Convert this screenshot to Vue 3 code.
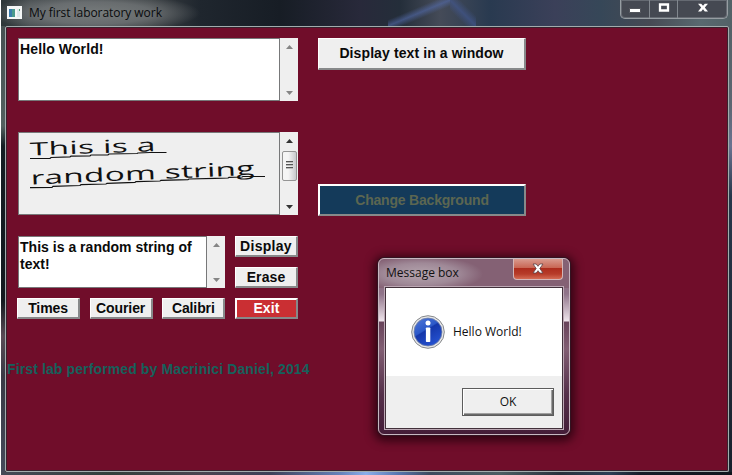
<script setup>
const fonts = ['Times', 'Courier', 'Calibri']
</script>

<template>
  <main class="window">
    <header class="titlebar">
      <div class="caption">
        <svg class="app-icon" width="15" height="13" viewBox="0 0 15 13">
          <rect width="15" height="13" fill="#f4f6f6" />
          <rect x="2" y="3" width="6" height="8" fill="#4a9a8c" />
          <rect x="2" y="3" width="3" height="8" fill="#397bab" />
          <rect x="10" y="3" width="3" height="8" fill="#dce8eb" />
          <path d="M12 3h1v2h-1z" fill="#55a276" />
        </svg>
        <span class="caption-text">My first laboratory work</span>
      </div>
      <div class="controls">
        <span class="control"><svg width="12" height="10" viewBox="0 0 12 10"><path d="M.5 5.5h11v4H.5z" fill="#fff" stroke="#52555c" /></svg></span>
        <span class="control"><svg width="12" height="10" viewBox="0 0 12 10"><path d="M2 1.500h8v6H2z" fill="none" stroke="#fff" stroke-width="2.3" /></svg></span>
        <span class="control last"><svg width="12" height="10" viewBox="0 0 12 10"><path d="M1 .8h3.2L6 2.800 7.8.8H11L7.8 4.500 11 8.500H7.8L6 6.300 4.2 8.500H1L4.2 4.500z" fill="#fff" /></svg></span>
      </div>
    </header>

    <section class="client">
      <div class="left">
        <div class="edit first">
          <div class="field"><span class="hello">Hello World!</span></div>
          <div class="scroll">
            <svg width="7" height="4" viewBox="0 0 7 4"><path d="M0 4 3.5 0 7 4z" /></svg>
            <svg width="7" height="4" viewBox="0 0 7 4"><path d="M0 0h7L3.500 4z" /></svg>
          </div>
        </div>
        <div class="edit second">
          <div class="field gray">
            <svg width="258" height="80" viewBox="19 133 258 80" class="slanted">
              <g transform="rotate(-2 30 155)">
                <text x="30" y="155.500" font-size="18" textLength="126" lengthAdjust="spacingAndGlyphs">This is a</text>
              </g>
              <g transform="rotate(-2.500 31 184)">
                <text x="31" y="184.500" font-size="18.500" textLength="224" lengthAdjust="spacingAndGlyphs">random string</text>
              </g>
              <path d="M30 158.500H50L51 157.500 70 156.800 71 156.200 90 155.800 91 155 108 154.800 109 154 137 153.500 138 153 150 152.500H166.500M30 187.700 52 187.300 53 186.300 80 185.500 81 184.700 106 184 107 183.300 135 182.300 136 181.600 160 181 161 180.300 188 179.600 189 179 215 178.300 228 178 229 177.400 242 177 243 176.500H265" />
            </svg>
          </div>
          <div class="scroll active">
            <svg width="7" height="4" viewBox="0 0 7 4"><path d="M0 4 3.5 0 7 4z" /></svg>
            <div class="thumb"><i></i><i></i><i></i></div>
            <svg width="7" height="4" viewBox="0 0 7 4"><path d="M0 0h7L3.500 4z" /></svg>
          </div>
        </div>
        <div class="editor-row">
          <div class="edit third">
            <div class="field"><span>This is a random string of<br>text!</span></div>
            <div class="scroll">
              <svg width="7" height="4" viewBox="0 0 7 4"><path d="M0 4 3.5 0 7 4z" /></svg>
              <svg width="7" height="4" viewBox="0 0 7 4"><path d="M0 0h7L3.500 4z" /></svg>
            </div>
          </div>
          <div class="actions">
            <button class="btn display">Display</button>
            <button class="btn">Erase</button>
          </div>
        </div>
        <div class="font-row">
          <button v-for="font in fonts" :key="font" class="btn font">{{ font }}</button>
          <button class="btn exit">Exit</button>
        </div>
        <p class="credit">First lab performed by Macrinici Daniel, 2014</p>
      </div>
      <div class="right">
        <button class="btn wide">Display text in a window</button>
        <button class="btn wide change">Change Background</button>
      </div>
    </section>

    <div class="dialog">
      <div class="dialog-head">
        <span class="dialog-title">Message box</span>
        <span class="dialog-close">
          <svg width="12" height="11" viewBox="0 0 12 11"><path d="M1 1h3.200L6 3.300 7.800 1H11L7.800 5.500 11 10H7.800L6 7.700 4.200 10H1l3.200-4.500z" fill="#fff" stroke="#5b4148" stroke-width=".8" /></svg>
        </span>
      </div>
      <div class="dialog-body">
        <div class="message">
          <svg width="34" height="34" viewBox="0 0 34 34">
            <defs>
              <linearGradient id="info-blue" x1="0" y1="0" x2=".6" y2="1">
                <stop offset="0" stop-color="#5379d8" />
                <stop offset=".48" stop-color="#2b58c8" />
                <stop offset=".52" stop-color="#1537aa" />
                <stop offset="1" stop-color="#2450cf" />
              </linearGradient>
            </defs>
            <circle cx="17" cy="17" r="16.300" fill="#e7e7e7" stroke="#85888c" />
            <circle cx="17" cy="17" r="14" fill="url(#info-blue)" stroke="#7483a8" stroke-width=".8" />
            <circle cx="17" cy="8" r="2.500" fill="#fff" />
            <rect x="14.900" y="12.500" width="4.400" height="14.500" rx=".8" fill="#fff" />
          </svg>
          <span>Hello World!</span>
        </div>
        <div class="dialog-foot"><button class="ok">OK</button></div>
      </div>
    </div>
  </main>
</template>

<style>
body { margin: 0; overflow: hidden; }
</style>

<style scoped>
* { box-sizing: border-box; }
.window {
  position: relative;
  width: 732px;
  height: 475px;
  padding: 0 3px 3px 5px;
  background:
    linear-gradient(90deg, #fff 1px, #0000 1px) 0 0 / 1px 475px no-repeat,
    linear-gradient(90deg, #454957 0, #323f3b 110px, #4a4450 200px, #3d4058 270px, #6682ba 340px, #8aaeea 366px, #5876b0 398px, #3d4a5e 430px, #4b5d62 500px, #27303c 560px, #2c3e55 610px, #151c28 640px, #10151d 732px) 0 472px / 732px 3px no-repeat,
    linear-gradient(180deg, #465152 0, #53605f 100px, #131d23 120px, #14191f 275px, #594b56 310px, #393a45 350px, #45495a 449px) 0 26px / 5px 449px no-repeat,
    linear-gradient(180deg, #536267 0, #5d6672 80px, #6a7391 120px, #26364a 170px, #202936 350px, #17202c 449px) 729px 26px / 3px 449px no-repeat,
    radial-gradient(ellipse 105px 20px at 95px 13px, #858989cc 0, #777b7dbb 55%, #0000 100%) 0 0 / 100% 26px no-repeat,
    linear-gradient(to bottom right, #0000 38%, #536bab99 50%, #0000 62%) 388px 0 / 62px 26px no-repeat,
    linear-gradient(to bottom left, #0000 30%, #43599599 50%, #0000 70%) 450px 0 / 26px 26px no-repeat,
    linear-gradient(90deg, #2c3537 0, #454b4e 30px, #393e41 150px, #1f262e 200px, #171d25 280px, #28293a 360px, #242e3a 400px, #454b58 440px, #293a50 490px, #3b4059 555px, #364758 600px, #464a54 650px, #596970 700px, #536267);
  font-family: "Liberation Sans", sans-serif;
  font-size: 14px;
  font-weight: bold;
  color: #0a0a0a;
}
.titlebar { display: flex; justify-content: space-between; height: 26px; }
.caption { display: flex; align-items: flex-start; padding: 6px 0 0 2px; }
.caption-text {
  margin: -1px 0 0 7px;
  font: 12px/16px "Open Sans", sans-serif;
  letter-spacing: -.05px;
  color: #090b0d;
}
.controls {
  display: flex;
  height: 19px;
  width: 108px;
  margin-right: 1px;
  border: 1px solid #969da2;
  border-top: 0;
  border-radius: 0 0 5px 5px;
  background: #454952;
  box-shadow: inset 0 0 0 1px #656a72;
}
.control { display: flex; justify-content: center; width: 29px; padding-top: 3px; border-right: 1px solid #81878e; }
.control:nth-child(2) { width: 28px; }
.control.last { width: 49px; border: 0; }
.client {
  display: flex;
  gap: 20px;
  height: 446px;
  border: 1px solid #a2acad;
  box-shadow: inset 0 0 0 1px #38212d;
  border-radius: 2px;
  background: #700d2a;
  padding: 11px 0 0 12px;
}
.left { width: 280px; }
.edit { display: flex; width: 280px; height: 63px; }
.field {
  flex: 1;
  min-width: 0;
  padding: 2px 0 0 1px;
  border: 1px solid #777879;
  background: #fff;
  line-height: 17px;
  white-space: nowrap;
  letter-spacing: .12px;
}
.scroll {
  display: flex;
  flex-direction: column;
  align-items: center;
  justify-content: space-between;
  width: 18px;
  padding: 7px 0 6px 1px;
  background: #efefef;
  fill: #858585;
}
.second { height: 83px; margin-top: 31px; }
.field.gray { padding: 0; background: #efefef; }
.slanted { display: block; font-family: "Open Sans", sans-serif; font-weight: 400; fill: #111; }
.slanted path { fill: none; stroke: #111; stroke-width: 1.2; }
.active { fill: #333; justify-content: flex-start; }
.thumb {
  display: flex;
  flex-direction: column;
  gap: 2px;
  align-items: center;
  width: 15px;
  height: 30px;
  margin: 8px 0 24px;
  padding-top: 9px;
  border: 1px solid #949494;
  border-radius: 2px;
  background: linear-gradient(90deg, #f5f5f5 40%, #c8c8cc);
}
.thumb i { width: 7px; height: 1px; background: #555; box-shadow: 0 1px #bbb; }
.editor-row { display: flex; gap: 10px; margin-top: 21px; }
.third { width: 207px; height: 52px; }
.third .field { letter-spacing: .02px; }
.actions { display: flex; flex-direction: column; gap: 10px; }
.btn {
  display: flex;
  align-items: center;
  justify-content: center;
  width: 63px;
  height: 21px;
  margin: 0;
  padding: 0;
  border: solid;
  border-width: 1px 2px 2px 1px;
  border-color: #fff #87898a #87898a #fff;
  background: #efefef;
  font: bold 14px/17px "Liberation Sans", sans-serif;
  letter-spacing: .1px;
  color: #0a0a0a;
  white-space: nowrap;
}
.display { letter-spacing: .3px; }
.font { letter-spacing: -.1px; }
.font-row { display: flex; justify-content: space-between; width: 281px; margin: 10px 0 0 -1px; }
.exit { border-width: 2px; background: #ca2f33; color: #fff; }
.credit { margin: 42px 0 0 -11px; line-height: 17px; white-space: nowrap; color: #15615c; letter-spacing: .12px; }
.right { display: flex; flex-direction: column; gap: 114px; }
.wide { width: 208px; height: 32px; letter-spacing: .1px; }
.change { border-width: 2px; background: #143a5a; color: #5c6651; letter-spacing: -.2px; }
.dialog {
  position: absolute;
  left: 378px;
  top: 258px;
  width: 192px;
  height: 177px;
  padding: 0 6px 6px;
  border: 1px solid #c7b7c1;
  border-radius: 6px;
  background:
    radial-gradient(ellipse 62px 18px at 42px 15px, #b5a5ae 0, #a693a0cc 60%, #0000 100%) 0 0 / 100% 29px no-repeat,
    linear-gradient(#846174, #846174) 0 0 / 100% 29px no-repeat,
    linear-gradient(180deg, #846174 0, #90748a 35px, #eee4eb 62px, #68435a 63px, #815e73 90px, #55304a 135px, #431c37 177px);
  box-shadow: 0 0 0 1px #321321, 0 2px 10px 4px #20000ccc;
  font: 12px/16px "Open Sans", sans-serif;
  color: #111;
}
.dialog-head { display: flex; justify-content: space-between; height: 28px; }
.dialog-title { padding: 6px 0 0 1px; letter-spacing: 0; }
.dialog-close {
  display: flex;
  justify-content: center;
  width: 50px;
  height: 21px;
  padding-top: 4px;
  border: 1px solid #d3b6b8;
  border-top: 0;
  border-radius: 0 0 4px 4px;
  background: linear-gradient(#d99a8e, #c86553 45%, #ad2c1d 46%, #b73c29 75%, #d46b54);
}
.dialog-body { height: 142px; border: 1px solid #42313b; outline: 1px solid #bda9b5; background: #fff; }
.message { display: flex; align-items: center; gap: 8px; height: 88px; padding-left: 25px; }
.dialog-foot { display: flex; justify-content: flex-end; height: 52px; padding: 12px 8px 0 0; background: #efefef; }
.ok {
  width: 92px;
  height: 28px;
  margin: 0;
  padding: 0 0 1px;
  border: 1px solid #5c5c5c;
  background: #efefef;
  box-shadow: inset 1px 1px #fff, inset -1px -1px #696969, inset -2px -2px #a0a0a0;
  font: 12px/16px "Open Sans", sans-serif;
  color: #111;
}
</style>
